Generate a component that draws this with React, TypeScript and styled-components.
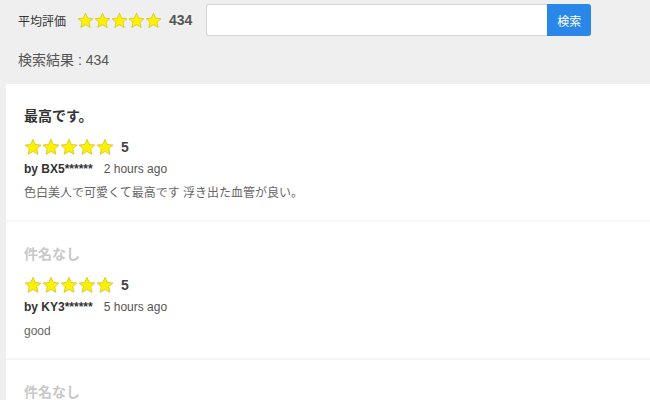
import React from "react";
import styled, { createGlobalStyle } from "styled-components";

type Review = {
  title: string;
  rating: number;
  user: string;
  time: string;
  body: string;
};

const reviews: Review[] = [
  {
    title: "最高です。",
    rating: 5,
    user: "BX5******",
    time: "2 hours ago",
    body: "色白美人で可愛くて最高です 浮き出た血管が良い。",
  },
  { title: "", rating: 5, user: "KY3******", time: "5 hours ago", body: "good" },
  { title: "", rating: 5, user: "MT8******", time: "7 hours ago", body: "good" },
];

function Star({ size }: { size: number }) {
  return (
    <svg width={size} height={size} viewBox="0 0 24 24">
      <path
        d="M12 1.8l3.1 6.9 7.4.7-5.6 5 1.7 7.4L12 17.9l-6.6 3.9 1.7-7.4-5.6-5 7.4-.7z"
        fill="#fff200"
        stroke="#cbbf1c"
        strokeWidth="1"
        strokeLinejoin="round"
      />
    </svg>
  );
}

function Stars({ size, count = 5 }: { size: number; count?: number }) {
  return (
    <StarRow>
      {Array.from({ length: count }).map((_, i) => (
        <Star key={i} size={size} />
      ))}
    </StarRow>
  );
}

export default function App() {
  return (
    <>
      <GlobalStyle />
      <Page>
        <TopBar>
          <AverageLabel>平均評価</AverageLabel>
          <Stars size={17} />
          <AverageCount>434</AverageCount>
          <SearchForm onSubmit={(e) => e.preventDefault()}>
            <SearchInput type="text" />
            <SearchButton type="submit">検索</SearchButton>
          </SearchForm>
        </TopBar>

        <ResultCount>検索結果 : 434</ResultCount>

        <ReviewList>
          {reviews.map((r, i) => (
            <ReviewItem key={i}>
              <ReviewTitle $empty={!r.title}>{r.title || "件名なし"}</ReviewTitle>
              <RatingRow>
                <Stars size={18} />
                <RatingValue>{r.rating}</RatingValue>
              </RatingRow>
              <MetaRow>
                <UserName>by {r.user}</UserName>
                <PostedAt>{r.time}</PostedAt>
              </MetaRow>
              <ReviewBody>{r.body}</ReviewBody>
            </ReviewItem>
          ))}
        </ReviewList>
      </Page>
    </>
  );
}

const GlobalStyle = createGlobalStyle`
  html, body {
    margin: 0;
    padding: 0;
    background: #efefef;
    overflow: hidden;
  }
  body {
    font-family: "Liberation Sans", Arial, "Noto Sans CJK JP", sans-serif;
    color: #333;
  }
`;

const Page = styled.div`
  width: 650px;
  height: 400px;
  overflow: hidden;
`;

const TopBar = styled.div`
  display: flex;
  align-items: center;
  height: 32px;
  padding: 4px 0 0 18px;
`;

const AverageLabel = styled.span`
  font-size: 12px;
  color: #333;
  margin-right: 11px;
`;

const StarRow = styled.span`
  display: inline-flex;
  align-items: center;

  svg {
    display: block;
  }
`;

const AverageCount = styled.span`
  font-size: 14px;
  font-weight: bold;
  color: #555;
  margin-left: 7px;
`;

const SearchForm = styled.form`
  display: flex;
  margin: 0 0 0 14px;
  height: 32px;
`;

const SearchInput = styled.input`
  box-sizing: border-box;
  width: 341px;
  height: 32px;
  border: 1px solid #d6d6d6;
  border-right: none;
  border-radius: 3px 0 0 3px;
  background: #fff;
  outline: none;
  padding: 0 8px;
  font-size: 14px;
`;

const SearchButton = styled.button`
  box-sizing: border-box;
  width: 44px;
  height: 32px;
  border: none;
  border-radius: 0 3px 3px 0;
  background: #2a87ea;
  color: #fff;
  font-size: 12px;
  font-family: inherit;
  cursor: pointer;
  padding: 0;
`;

const ResultCount = styled.div`
  font-size: 14px;
  color: #555;
  padding: 15px 0 0 18px;
  height: 34px;
  box-sizing: border-box;
  line-height: 18px;
`;

const ReviewList = styled.ul`
  list-style: none;
  margin: 14px 0 0 6px;
  padding: 0;
  width: 700px;
  background: #fff;
`;

const ReviewItem = styled.li`
  padding: 22px 18px 18px;
  border-bottom: 2px solid #f6f6f6;
`;

const ReviewTitle = styled.div<{ $empty: boolean }>`
  font-size: 14px;
  line-height: 20px;
  font-weight: bold;
  color: ${(p) => (p.$empty ? "#c8c8c8" : "#333")};
  margin-bottom: 11px;
`;

const RatingRow = styled.div`
  display: flex;
  align-items: center;
  height: 20px;
`;

const RatingValue = styled.span`
  font-size: 14px;
  font-weight: bold;
  color: #444;
  margin-left: 7px;
`;

const MetaRow = styled.div`
  display: flex;
  gap: 11px;
  font-size: 12px;
  line-height: 18px;
  margin-top: 3px;
`;

const UserName = styled.span`
  font-weight: bold;
  color: #333;
`;

const PostedAt = styled.span`
  color: #555;
`;

const ReviewBody = styled.p`
  margin: 6px 0 0;
  font-size: 12px;
  line-height: 18px;
  color: #666;
`;
